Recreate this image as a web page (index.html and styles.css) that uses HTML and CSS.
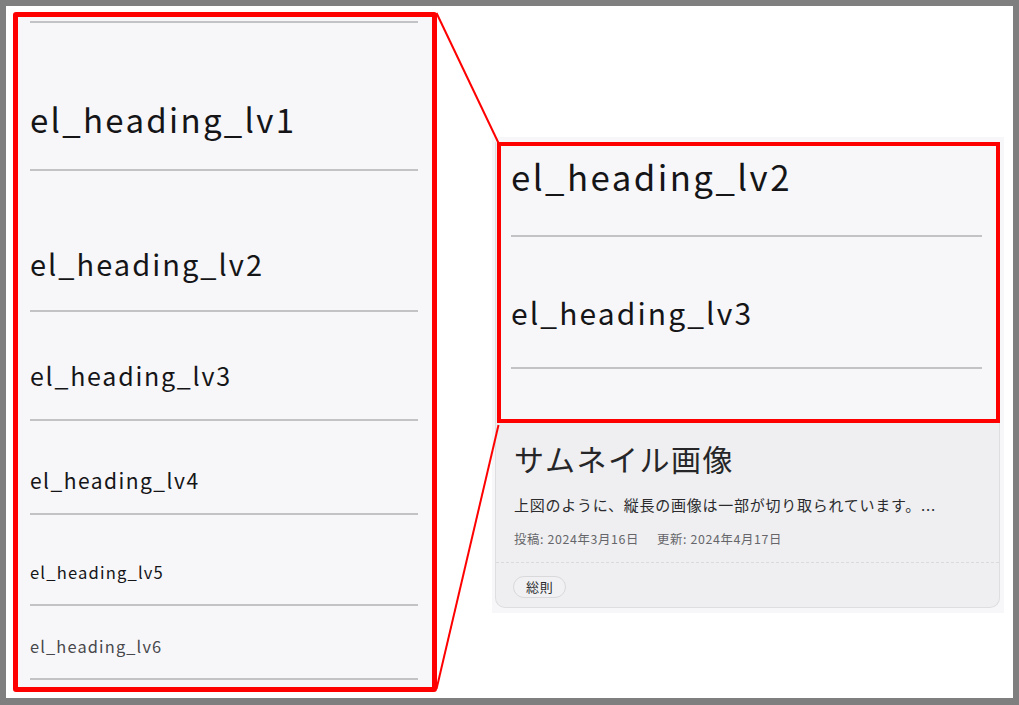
FILE: index.html
```html
<!DOCTYPE html>
<html lang="ja">
<head>
<meta charset="utf-8">
<title>el_heading</title>
<link rel="stylesheet" href="styles.css">
</head>
<body>
<div class="frame">
  <section class="zoom-src">
    <div class="rule"></div>
    <h1 class="hd hd1">el_heading_lv1</h1>
    <div class="rule"></div>
    <h2 class="hd hd2">el_heading_lv2</h2>
    <div class="rule"></div>
    <h3 class="hd hd3">el_heading_lv3</h3>
    <div class="rule"></div>
    <h4 class="hd hd4">el_heading_lv4</h4>
    <div class="rule"></div>
    <h5 class="hd hd5">el_heading_lv5</h5>
    <div class="rule"></div>
    <h6 class="hd hd6">el_heading_lv6</h6>
    <div class="rule"></div>
  </section>

  <section class="stage">
    <article class="card">
      <div class="thumb">
        <div class="thumb-inner">
          <div class="thd thd2">el_heading_lv2</div>
          <div class="thumb-rule"></div>
          <div class="thd thd3">el_heading_lv3</div>
          <div class="thumb-rule"></div>
        </div>
      </div>
      <div class="card-body">
        <h2 class="card-title">サムネイル画像</h2>
        <p class="card-desc">上図のように、縦長の画像は一部が切り取られています。...</p>
        <p class="card-meta"><span class="meta-item">投稿: 2024年3月16日</span><span>更新: 2024年4月17日</span></p>
      </div>
      <div class="card-foot">
        <span class="tag">総則</span>
      </div>
    </article>
  </section>

  <svg class="connectors" width="1019" height="705" viewBox="0 0 1019 705" aria-hidden="true">
    <line x1="436.5" y1="13" x2="498.5" y2="143" stroke="#ff0000" stroke-width="2"/>
    <line x1="436.5" y1="689" x2="498.5" y2="425" stroke="#ff0000" stroke-width="2"/>
  </svg>
</div>
</body>
</html>
```
FILE: styles.css
```css
* { box-sizing: border-box; }

html, body {
  margin: 0;
  padding: 0;
  background: #ffffff;
}

body {
  font-family: "Noto Sans CJK JP", "Noto Sans", sans-serif;
  color: #222;
}

.frame {
  position: relative;
  width: 1019px;
  height: 705px;
  border: 6px solid #7f7f7f;
  border-bottom-width: 7px;
  background: #ffffff;
  display: flex;
  align-items: flex-start;
  overflow: hidden;
}

/* ---------- left: zoom source ---------- */
.zoom-src {
  margin: 6px 0 0 7px;
  width: 424px;
  height: 680px;
  border: 5px solid #ff0000;
  border-radius: 3px;
  background: #f7f7f9;
  padding: 4px 14px 0 12px;
  flex: none;
  overflow: hidden;
}

.rule {
  height: 2px;
  background: #c3c3c6;
}

.hd {
  margin: 0;
  font-weight: 400;
  line-height: 1.4;
  letter-spacing: 0.07em;
  color: #151518;
}

.hd1 { font-size: 33px; margin: 72.5px 0 27px; }
.hd2 { font-size: 29px; margin: 72.06px 0 27.04px; }
.hd3 { font-size: 25px; margin: 45.6px 0 25.7px; }
.hd4 { font-size: 21px; margin: 45.14px 0 17.46px; }
.hd5 { font-size: 16.6px; margin: 46.14px 0 19.62px; }
.hd6 { font-size: 16.4px; margin: 29.37px 0 19.67px; color: #48484c; }

/* ---------- right: card ---------- */
.stage {
  margin: 131px 0 0 55px;
  width: 512px;
  background: #f7f7f9;
  padding: 5px 4px 5px 3px;
  flex: none;
}

.card {
  background: #efeff1;
  border: 1px solid #dedee1;
  border-top: 0;
  border-radius: 0 0 10px 10px;
}

.thumb {
  height: 281px;
  margin: 0 -1px 0 1px;
  border: 4px solid #ff0000;
  background: #f7f7f9;
  overflow: hidden;
}

.thumb-inner {
  padding: 6.17px 14px 0 10px;
}

.thd {
  font-weight: 400;
  line-height: 1.4;
  letter-spacing: 0.07em;
  color: #151518;
}

.thd2 { font-size: 34.8px; margin-bottom: 33.8px; }
.thd3 { font-size: 30px; margin: 54.22px 0 34.4px; }

.thumb-rule {
  height: 2px;
  background: #c3c3c6;
}

.card-body {
  padding: 14px 18px 0 18px;
}

.card-title {
  margin: 0;
  font-size: 30px;
  font-weight: 400;
  line-height: 1.4;
  letter-spacing: 0.05em;
  color: #262628;
}

.card-desc {
  margin: 14px 0 0;
  font-size: 15px;
  line-height: 1.6;
  letter-spacing: 0.05em;
  color: #2b2b2e;
}

.card-meta {
  margin: 13px 0 12px;
  font-size: 12.4px;
  line-height: 1.6;
  letter-spacing: 0.05em;
  color: #66666a;
}

.meta-item {
  margin-right: 18px;
}

.card-foot {
  display: flex;
  border-top: 1px dashed #dadadd;
  padding: 12.7px 17px 9px;
}

.tag {
  height: 22px;
  padding: 0 12px;
  border: 1px solid #d9d9dc;
  border-radius: 11px;
  background: #f1f1f3;
  font-size: 13px;
  line-height: 20px;
  letter-spacing: 0.05em;
  color: #2a2a2d;
}

/* ---------- overlay connectors ---------- */
.connectors {
  position: absolute;
  left: -6px;
  top: -6px;
  pointer-events: none;
}
```
